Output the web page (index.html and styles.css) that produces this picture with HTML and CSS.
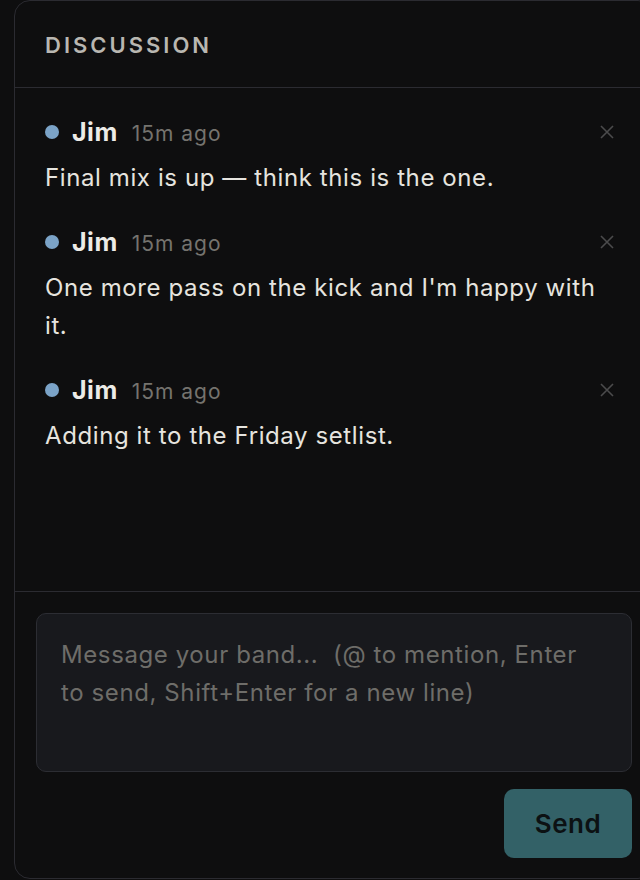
FILE: index.html
```html
<!DOCTYPE html>
<html lang="en">
<head>
<meta charset="utf-8">
<title>Discussion</title>
<link rel="stylesheet" href="styles.css">
</head>
<body>
<section class="panel">
  <header class="panel-header">
    <h2 class="panel-title">Discussion</h2>
  </header>
  <div class="messages">
    <article class="message">
      <div class="message-meta">
        <span class="dot"></span>
        <span class="author">Jim</span>
        <span class="time">15m ago</span>
        <button class="close" aria-label="Delete"><svg viewBox="0 0 16 16" width="16" height="16"><path d="M2 2L14 14M14 2L2 14" /></svg></button>
      </div>
      <p class="message-body">Final mix is up — think this is the one.</p>
    </article>
    <article class="message">
      <div class="message-meta">
        <span class="dot"></span>
        <span class="author">Jim</span>
        <span class="time">15m ago</span>
        <button class="close" aria-label="Delete"><svg viewBox="0 0 16 16" width="16" height="16"><path d="M2 2L14 14M14 2L2 14" /></svg></button>
      </div>
      <p class="message-body">One more pass on the kick and I'm happy with it.</p>
    </article>
    <article class="message">
      <div class="message-meta">
        <span class="dot"></span>
        <span class="author">Jim</span>
        <span class="time">15m ago</span>
        <button class="close" aria-label="Delete"><svg viewBox="0 0 16 16" width="16" height="16"><path d="M2 2L14 14M14 2L2 14" /></svg></button>
      </div>
      <p class="message-body">Adding it to the Friday setlist.</p>
    </article>
  </div>
  <div class="composer">
    <textarea class="input" placeholder="Message your band...  (@ to mention, Enter to send, Shift+Enter for a new line)"></textarea>
    <div class="actions">
      <button class="send">Send</button>
    </div>
  </div>
</section>
</body>
</html>
```

FILE: styles.css
```css
html, body {
  margin: 0;
  padding: 0;
  background: #0e0e0f;
  overflow: hidden;
  height: 880px;
}

body {
  font-family: Inter, "Noto Sans", sans-serif;
  color: #e6e4df;
}

.panel {
  box-sizing: border-box;
  margin-left: 14px;
  width: 640px;
  height: 879px;
  border: 1px solid #2b2b31;
  border-radius: 16px;
  background: #0e0e0f;
  display: flex;
  flex-direction: column;
}

.panel-header {
  box-sizing: border-box;
  height: 87px;
  border-bottom: 1px solid #2b2b31;
  padding-left: 30px;
  display: flex;
  align-items: center;
}

.panel-title {
  margin: 0;
  margin-top: 1px;
  font-size: 22px;
  font-weight: 600;
  letter-spacing: 3px;
  text-transform: uppercase;
  color: #b9b7b1;
}

.messages {
  box-sizing: border-box;
  height: 504px;
  border-bottom: 1px solid #2b2b31;
  padding: 27px 24px 0 30px;
  display: flex;
  flex-direction: column;
  gap: 28px;
}

.message-meta {
  height: 34px;
  display: flex;
  align-items: center;
}

.dot {
  width: 14px;
  height: 14px;
  border-radius: 50%;
  background: #7ba3c7;
  margin-right: 13px;
}

.author {
  font-size: 25px;
  font-weight: 700;
  letter-spacing: 0.5px;
  color: #ecebe7;
  margin-right: 14px;
}

.time {
  font-size: 21px;
  letter-spacing: 1px;
  color: #75736e;
  margin-top: 2px;
}

.close {
  margin-left: auto;
  background: none;
  border: 0;
  padding: 0;
  width: 16px;
  height: 16px;
  margin-right: 14px;
  display: flex;
}

.close svg path {
  stroke: #4b4b4c;
  stroke-width: 1.6;
  fill: none;
}

.message-body {
  margin: 10px 0 0;
  font-size: 24px;
  letter-spacing: 0.6px;
  line-height: 38px;
  padding-right: 8px;
}

.composer {
  flex: 1;
  box-sizing: border-box;
  padding: 21px 8px 20px 21px;
  display: flex;
  flex-direction: column;
  gap: 17px;
}

.input {
  box-sizing: border-box;
  width: 596px;
  height: 159px;
  resize: none;
  background: #18191d;
  border: 1px solid #2c2d33;
  border-radius: 10px;
  padding: 22px 24px 18px;
  font-family: Inter, "Noto Sans", sans-serif;
  font-size: 24px;
  letter-spacing: 0.6px;
  line-height: 38px;
  color: #e6e4df;
  outline: none;
}

.input::placeholder {
  color: #6e6d69;
}

.actions {
  width: 596px;
  display: flex;
  justify-content: flex-end;
}

.send {
  width: 128px;
  height: 69px;
  border: 0;
  border-radius: 10px;
  background: #336167;
  color: #0c1113;
  font-family: Inter, "Noto Sans", sans-serif;
  font-size: 26px;
  font-weight: 600;
  letter-spacing: 0.5px;
}
```
